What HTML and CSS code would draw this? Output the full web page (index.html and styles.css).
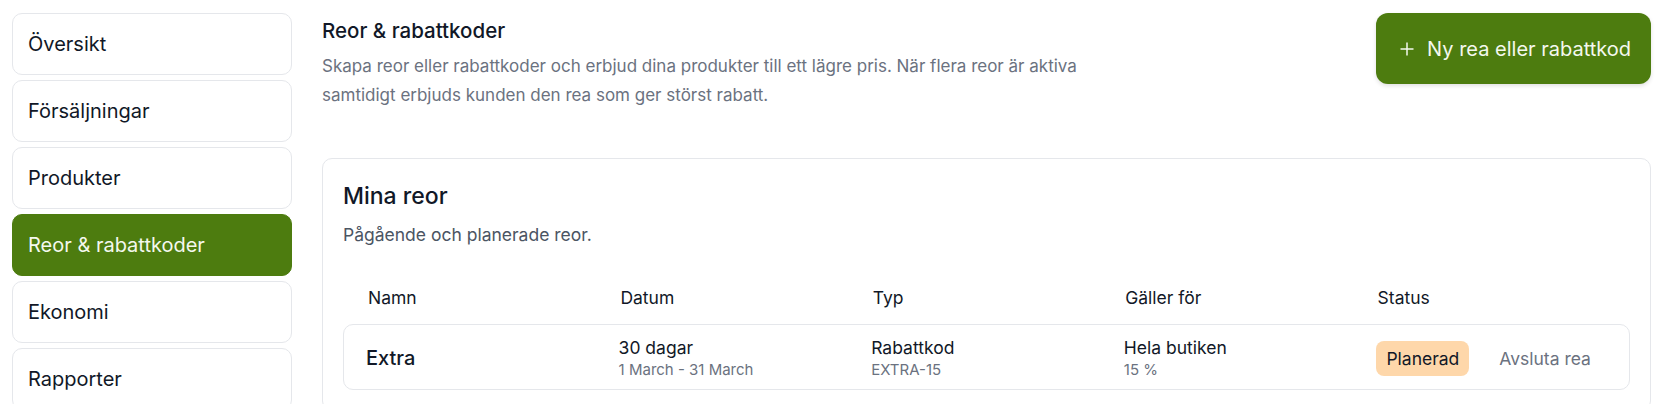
FILE: index.html
```html
<!DOCTYPE html>
<html>
    <head>
        <meta name="viewport" content="width=device-width"/>
        <title>Reor &amp; rabattkoder</title>
        <link rel="stylesheet" href="styles.css">
    </head>
    <body>
        <div class="layout">
            <nav class="sidebar">
                <a class="nav-item" href="#">Översikt</a>
                <a class="nav-item" href="#">Försäljningar</a>
                <a class="nav-item" href="#">Produkter</a>
                <a class="nav-item active" href="#">Reor &amp; rabattkoder</a>
                <a class="nav-item" href="#">Ekonomi</a>
                <a class="nav-item" href="#">Rapporter</a>
            </nav>

            <main class="main">
                <div class="page-head">
                    <div class="page-intro">
                        <h1 class="page-title">Reor &amp; rabattkoder</h1>
                        <p class="page-desc">Skapa reor eller rabattkoder och erbjud dina produkter till ett lägre pris. När flera reor är aktiva samtidigt erbjuds kunden den rea som ger störst rabatt.</p>
                    </div>
                    <button class="btn-new">
                        <svg width="14" height="14" viewBox="0 0 14 14"><path d="M7 0.5v13M0.5 7h13" stroke="currentColor" stroke-width="1.5" fill="none"/></svg>
                        Ny rea eller rabattkod
                    </button>
                </div>

                <section class="card">
                    <h2 class="card-title">Mina reor</h2>
                    <p class="card-sub">Pågående och planerade reor.</p>

                    <div class="table-head">
                        <span>Namn</span>
                        <span>Datum</span>
                        <span>Typ</span>
                        <span>Gäller för</span>
                        <span>Status</span>
                    </div>
                    <div class="sale-row">
                        <div class="sale-name">Extra</div>
                        <div>
                            <div class="cell-main">30 dagar</div>
                            <div class="cell-sub">1 March - 31 March</div>
                        </div>
                        <div>
                            <div class="cell-main">Rabattkod</div>
                            <div class="cell-sub">EXTRA-15</div>
                        </div>
                        <div>
                            <div class="cell-main">Hela butiken</div>
                            <div class="cell-sub">15 %</div>
                        </div>
                        <div class="status-cell">
                            <span class="badge">Planerad</span>
                            <a class="end-link" href="#">Avsluta rea</a>
                        </div>
                    </div>
                </section>
            </main>
        </div>
    </body>
</html>
```

FILE: styles.css
```css
body {
    margin: 0;
    background: #fff;
    font-family: Inter, "Liberation Sans", sans-serif;
    color: #111827;
}
.layout {
    display: flex;
    gap: 30px;
    padding: 13px 28px 0 12px;
}
.sidebar {
    width: 280px;
    flex-shrink: 0;
    display: flex;
    flex-direction: column;
    gap: 5px;
}
.nav-item {
    display: flex;
    align-items: center;
    height: 60px;
    padding: 0 15px;
    border: 1px solid #e5e7eb;
    border-radius: 10px;
    background: #fff;
    color: #111827;
    font-size: 20px;
    text-decoration: none;
}
.nav-item.active {
    background: #4d7c0f;
    border-color: #4d7c0f;
    color: #f4f8ee;
}

.main {
    flex: 1;
    min-width: 0;
}
.page-head {
    display: flex;
    justify-content: space-between;
    align-items: flex-start;
}
.page-title {
    margin: 4px 0 0;
    font-size: 20.5px;
    font-weight: 500;
    line-height: 28px;
}
.page-desc {
    margin: 7px 0 0;
    max-width: 768px;
    font-size: 17px;
    line-height: 29px;
    color: #6b7280;
}
.btn-new {
    display: flex;
    align-items: center;
    gap: 13px;
    height: 71px;
    padding: 0 20px 0 24px;
    border: none;
    border-radius: 12px;
    background: #4d7c0f;
    color: #f4f8ee;
    font-family: inherit;
    font-size: 20px;
    box-shadow: 0 2px 4px rgba(0, 0, 0, .12);
}

.card {
    margin-top: 48px;
    border: 1px solid #e5e7eb;
    border-radius: 10px;
    padding: 22px 20px 20px;
}
.card-title {
    margin: 0;
    font-size: 23px;
    font-weight: 500;
    line-height: 30px;
}
.card-sub {
    margin: 11px 0 0;
    font-size: 17.5px;
    line-height: 26px;
    color: #4b5563;
}
.table-head,
.sale-row {
    display: grid;
    grid-template-columns: repeat(5, 1fr);
    align-items: center;
}
.table-head {
    margin-top: 29px;
    padding-left: 25px;
    height: 40px;
    font-size: 17.5px;
}
.sale-row {
    margin-top: 7px;
    height: 66px;
    padding: 2px 0 0 22px;
    border: 1px solid #e5e7eb;
    border-radius: 10px;
    box-sizing: border-box;
}
.sale-name {
    font-size: 20px;
    font-weight: 500;
}
.cell-main {
    font-size: 17.5px;
    line-height: 22px;
}
.cell-sub {
    font-size: 15px;
    line-height: 21px;
    color: #6b7280;
}
.status-cell {
    display: flex;
    align-items: center;
    gap: 30px;
}
.badge {
    padding: 6px 10px;
    border-radius: 8px;
    background: #fed7aa;
    font-size: 17.5px;
    line-height: 23px;
}
.end-link {
    color: #6b7280;
    font-size: 17.5px;
    text-decoration: none;
}
```
